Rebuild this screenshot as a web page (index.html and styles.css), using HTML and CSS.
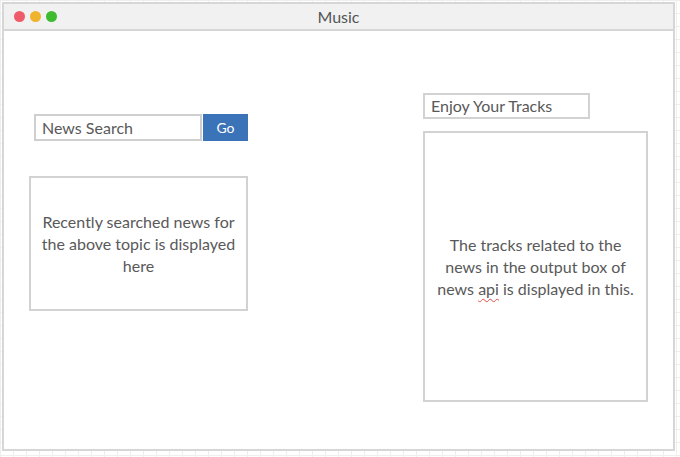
FILE: index.html
```html
<!DOCTYPE html>
<html lang="en">
<head>
    <meta charset="UTF-8">
    <meta name="viewport" content="width=device-width, initial-scale=1.0">
    <title>Music</title>
    <link rel="stylesheet" href="styles.css">
</head>
<body>
    <div class="window">
        <div class="title-bar">
            <div class="dots">
                <span class="dot red"></span>
                <span class="dot yellow"></span>
                <span class="dot green"></span>
            </div>
            <div class="title">Music</div>
        </div>

        <div class="content">
            <div class="left-col">
                <div class="search-row">
                    <div class="search-input">News Search</div>
                    <button class="go-btn">Go</button>
                </div>
                <div class="news-box">
                    <p>Recently searched news for the above topic is displayed here</p>
                </div>
            </div>

            <div class="right-col">
                <div class="tracks-input">Enjoy Your Tracks</div>
                <div class="tracks-box">
                    <p>The tracks related to the news in the output box of news <span class="misspelled">api</span> is displayed in this.</p>
                </div>
            </div>
        </div>
    </div>
</body>
</html>
```

FILE: styles.css
```css
body {
    margin: 0;
    font-family: Lato, 'Open Sans', sans-serif;
    color: #595959;
    width: 680px;
    height: 457px;
    overflow: hidden;
    background-color: #fff;
    background-image:
        linear-gradient(to right, #eeeeee 1px, transparent 1px),
        linear-gradient(to bottom, #eeeeee 1px, transparent 1px);
    background-size: 13px 13px;
}

.window {
    margin: 2px 0 0 2px;
    width: 673px;
    height: 449px;
    box-sizing: border-box;
    border: 2px solid #d6d6d6;
    background-color: white;
    display: flex;
    flex-direction: column;
}

.title-bar {
    height: 27px;
    box-sizing: border-box;
    border-bottom: 2px solid #d6d6d6;
    background-color: #f1f1f1;
    display: flex;
    align-items: center;
    position: relative;
}

.dots {
    display: flex;
    gap: 5px;
    padding-left: 10px;
}

.dot {
    width: 11px;
    height: 11px;
    border-radius: 50%;
}

.red { background-color: #ee5c6a; }
.yellow { background-color: #f0b42c; }
.green { background-color: #3fbb2f; }

.title {
    position: absolute;
    left: 0;
    right: 0;
    text-align: center;
    font-size: 16px;
    color: #555;
    pointer-events: none;
}

.content {
    flex: 1;
    display: flex;
}

.left-col {
    margin-left: 25px;
    padding-top: 83px;
    width: 219px;
}

.search-row {
    display: flex;
    margin-left: 5px;
    height: 27px;
}

.search-input {
    width: 168px;
    box-sizing: border-box;
    border: 2px solid #cfcfcf;
    padding-left: 6px;
    font-size: 16px;
    line-height: 23px;
}

.go-btn {
    margin-left: 1px;
    width: 45px;
    border: none;
    background-color: #3b73b9;
    color: white;
    font-family: inherit;
    font-size: 14px;
    padding: 0;
}

.news-box {
    margin-top: 35px;
    height: 135px;
    box-sizing: border-box;
    border: 2px solid #d2d2d2;
    display: flex;
    align-items: center;
    justify-content: center;
}

.news-box p,
.tracks-box p {
    margin: 0;
    text-align: center;
    font-size: 16px;
    line-height: 22px;
}

.news-box p {
    padding: 0 10px;
}

.right-col {
    margin-left: 175px;
    padding-top: 62px;
}

.tracks-input {
    width: 167px;
    height: 26px;
    box-sizing: border-box;
    border: 2px solid #d2d2d2;
    padding-left: 6px;
    font-size: 16px;
    line-height: 22px;
}

.tracks-box {
    margin-top: 12px;
    width: 225px;
    height: 271px;
    box-sizing: border-box;
    border: 2px solid #d2d2d2;
    display: flex;
    align-items: center;
    justify-content: center;
}

.tracks-box p {
    padding: 0 12px;
}

.misspelled {
    text-decoration: underline wavy #e84a4a;
    text-decoration-thickness: 1px;
    text-underline-offset: 3px;
}
```
